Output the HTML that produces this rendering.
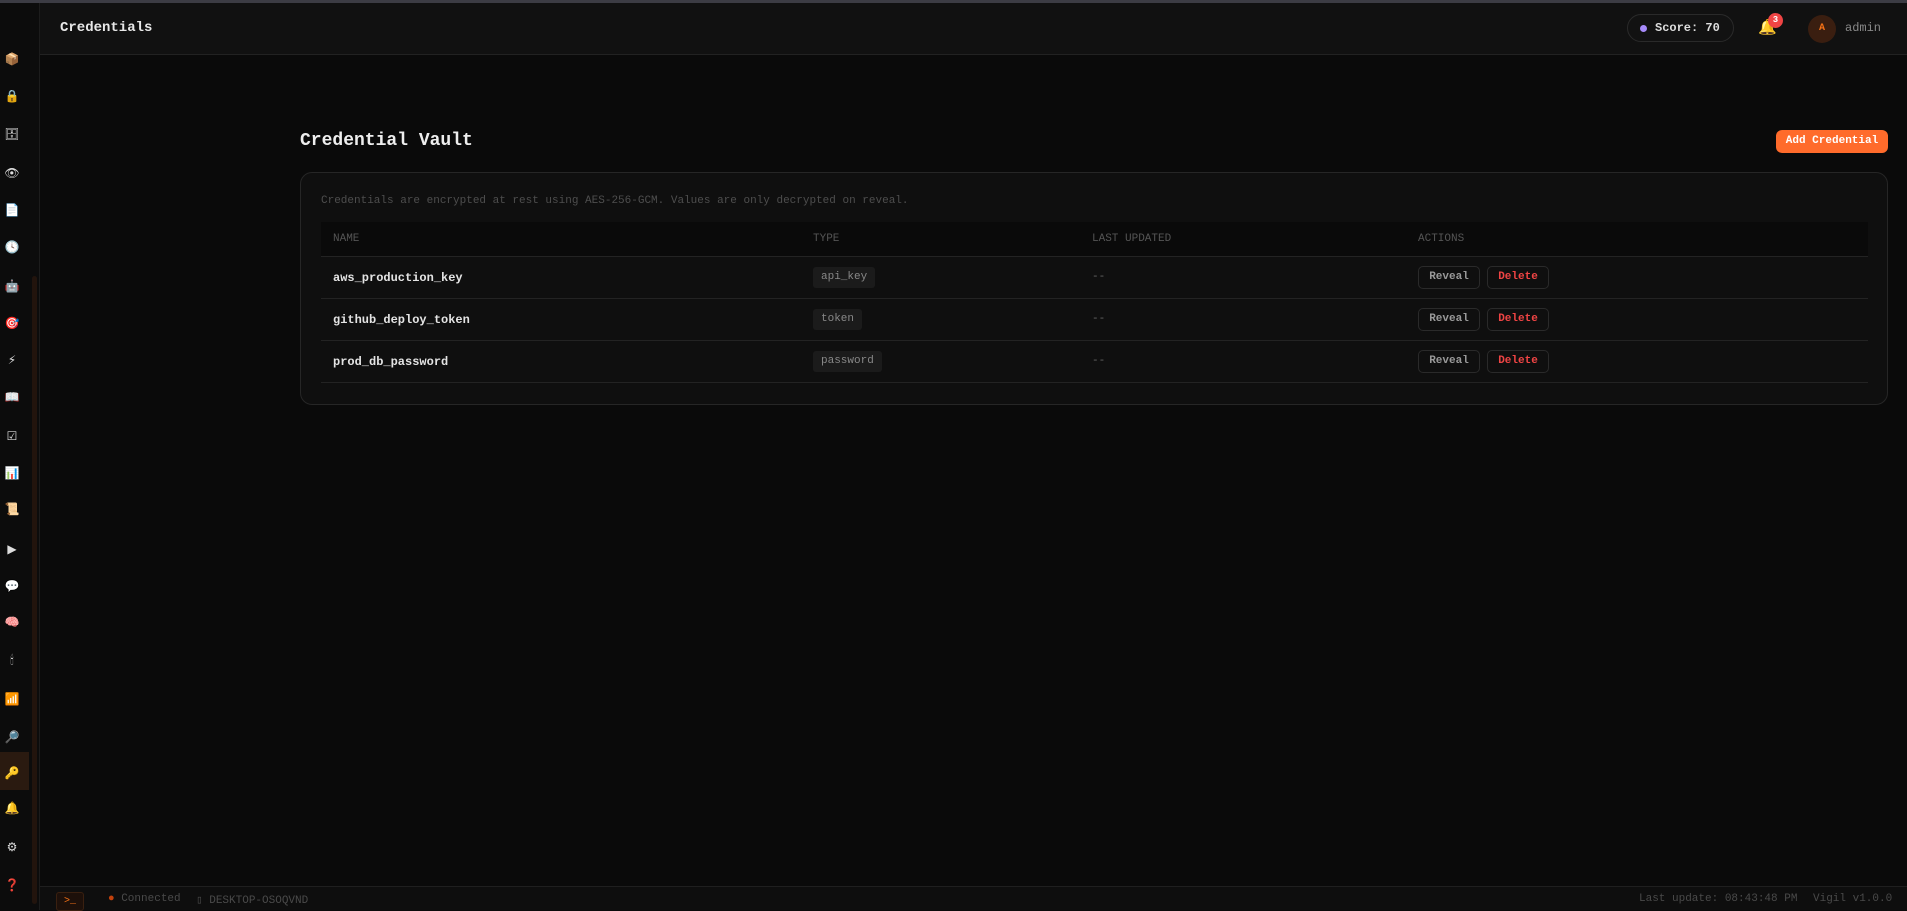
<!DOCTYPE html>
<html><head><meta charset="utf-8"><style>
*{margin:0;padding:0;box-sizing:border-box}
body{width:1907px;height:910px;background:#0a0a0a;font-family:"Liberation Mono","DejaVu Sans Mono",monospace;color:#ddd;position:relative;overflow:hidden}
.topline{position:absolute;left:0;top:0;width:1907px;height:3px;background:#3c3c44}
.side{position:absolute;left:0;top:3px;width:40px;height:907px;background:#0c0c0c;border-right:1px solid #1c1c1c}
.ic{position:absolute;left:2px;width:20px;text-align:center;font-size:12px;line-height:16px;font-family:"DejaVu Sans",sans-serif}
.active{position:absolute;left:0;top:749px;width:29px;height:38px;background:#2a1a10}
.track{position:absolute;left:32px;top:273px;width:5px;height:628px;background:#22140d;border-radius:3px}
.header{position:absolute;left:40px;top:3px;width:1867px;height:52px;background:#111;border-bottom:1px solid #222}
.title{position:absolute;left:20px;top:17px;font-size:14px;font-weight:bold;color:#e8e8e8}
.pill{position:absolute;left:1587px;top:11px;width:107px;height:28px;border:1px solid #2a2a2a;border-radius:14px;background:#121212;font-size:12px;font-weight:bold;color:#ddd;line-height:26px;padding-left:27px}
.pill:before{content:"";position:absolute;left:12px;top:10px;width:7px;height:7px;border-radius:50%;background:#a78bfa}
.bell{position:absolute;left:1718px;top:15px;font-size:15px;font-family:"DejaVu Sans",sans-serif;color:#f5b82e}
.badge{position:absolute;left:1728px;top:10px;width:15px;height:15px;border-radius:50%;background:#ef4444;color:#fff;font-size:9px;font-weight:bold;text-align:center;line-height:15px}
.av{position:absolute;left:1768px;top:12px;width:28px;height:28px;border-radius:50%;background:#3a1e10;color:#f97316;font-size:10px;font-weight:bold;text-align:center;line-height:28px}
.admin{position:absolute;left:1805px;top:18px;font-size:12px;color:#888}
h1{position:absolute;left:300px;top:131px;font-size:18px;font-weight:bold;color:#eee}
.add{position:absolute;left:1776px;top:130px;width:112px;height:23px;background:#ff6b2b;border-radius:6px;color:#fff;font-size:11px;font-weight:bold;text-align:center;line-height:23px}
.card{position:absolute;left:300px;top:172px;width:1588px;height:233px;background:#0f0f0f;border:1px solid #262626;border-radius:12px}
.sub{position:absolute;left:20px;top:22px;font-size:11px;color:#4e4e4e}
.th{position:absolute;left:20px;top:49px;width:1547px;height:35px;background:#0a0a0a;border-bottom:1px solid #232323}
.th span{position:absolute;top:11px;font-size:11px;color:#555}
.row{position:absolute;left:20px;width:1547px;height:42px;border-bottom:1px solid #232323}
.nm{position:absolute;left:12px;top:14px;font-size:12px;font-weight:bold;color:#e4e4e4}
.ty{position:absolute;left:492px;top:10px;height:21px;padding:0 8px;background:#1b1b1b;border-radius:3px;font-size:11px;color:#888;line-height:21px}
.du{position:absolute;left:771px;top:14px;font-size:11px;color:#666}
.b{position:absolute;top:9px;width:62px;height:23px;border:1px solid #2a2a2a;border-radius:5px;font-size:11px;text-align:center;line-height:21px;font-weight:bold}
.rv{left:1097px;color:#999}.dl{left:1166px;color:#ef4444}
.foot{position:absolute;left:40px;top:886px;width:1867px;height:24px;background:#0e0e0e;border-top:1px solid #1f1f1f;font-size:11px;color:#4a4a4a}
.term{position:absolute;left:16px;top:5px;width:28px;height:19px;border:1px solid #3a2010;border-radius:3px;background:#1d100a;color:#f97316;font-size:10px;text-align:center;line-height:17px}
.f{position:absolute;top:6px}
</style></head><body>
<div class="topline"></div>
<div class="side">
<div class="track"></div>
<div class="active"></div>
<div class="ic" style="top:48px">📦</div>
<div class="ic" style="top:85px">🔒</div>
<div class="ic" style="top:123px">🗄</div>
<div class="ic" style="top:162px">👁</div>
<div class="ic" style="top:199px">📄</div>
<div class="ic" style="top:236px">🕓</div>
<div class="ic" style="top:275px">🤖</div>
<div class="ic" style="top:312px">🎯</div>
<div class="ic" style="top:349px">⚡</div>
<div class="ic" style="top:386px">📖</div>
<div class="ic" style="top:425px">☑</div>
<div class="ic" style="top:462px">📊</div>
<div class="ic" style="top:498px">📜</div>
<div class="ic" style="top:538px">▶</div>
<div class="ic" style="top:575px">💬</div>
<div class="ic" style="top:611px">🧠</div>
<div class="ic" style="top:649px">🕯</div>
<div class="ic" style="top:688px">📶</div>
<div class="ic" style="top:726px">🔎</div>
<div class="ic" style="top:762px">🔑</div>
<div class="ic" style="top:797px">🔔</div>
<div class="ic" style="top:836px">⚙</div>
<div class="ic" style="top:874px;color:#e11d48">❓</div>
</div>
<div class="header">
<div class="title">Credentials</div>
<div class="pill">Score: 70</div>
<div class="bell">🔔</div>
<div class="badge">3</div>
<div class="av">A</div>
<div class="admin">admin</div>
</div>
<h1>Credential Vault</h1>
<div class="add">Add Credential</div>
<div class="card">
<div class="sub">Credentials are encrypted at rest using AES-256-GCM. Values are only decrypted on reveal.</div>
<div class="th"><span style="left:12px">NAME</span><span style="left:492px">TYPE</span><span style="left:771px">LAST UPDATED</span><span style="left:1097px">ACTIONS</span></div>
<div class="row" style="top:84px"><div class="nm">aws_production_key</div><div class="ty">api_key</div><div class="du">--</div><div class="b rv">Reveal</div><div class="b dl">Delete</div></div>
<div class="row" style="top:126px"><div class="nm">github_deploy_token</div><div class="ty">token</div><div class="du">--</div><div class="b rv">Reveal</div><div class="b dl">Delete</div></div>
<div class="row" style="top:168px"><div class="nm">prod_db_password</div><div class="ty">password</div><div class="du">--</div><div class="b rv">Reveal</div><div class="b dl">Delete</div></div>
</div>
<div class="foot">
<div class="term">&gt;_</div>
<div class="f" style="left:68px"><span style="color:#c2410c">●</span> Connected</div>
<div class="f" style="left:156px">▯ DESKTOP-OSOQVND</div>
<div class="f" style="left:1599px">Last update: 08:43:48 PM</div>
<div class="f" style="left:1773px">Vigil v1.0.0</div>
</div>
</body></html>
